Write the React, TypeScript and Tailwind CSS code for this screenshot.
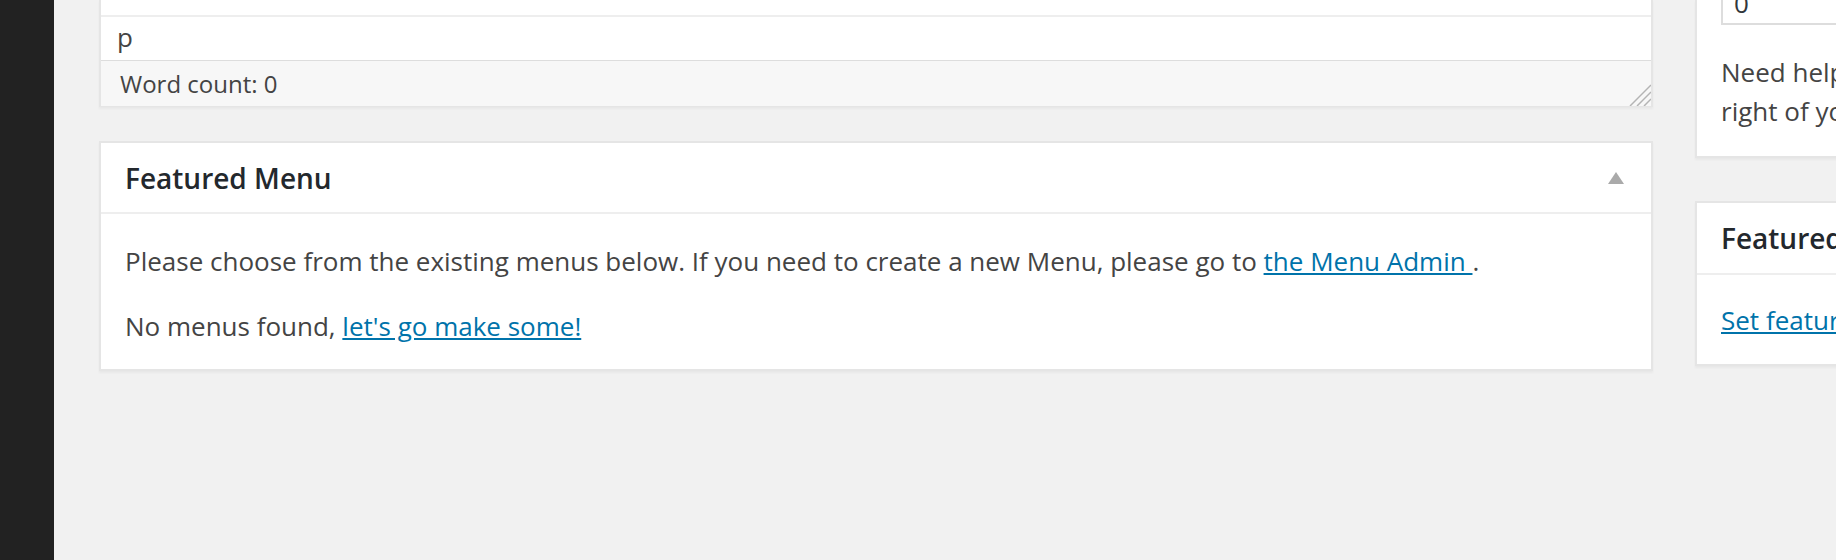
export default function App() {
  return (
    <div className="flex h-[560px] w-[1836px] overflow-hidden bg-[#f1f1f1] font-['Open_Sans',sans-serif] text-[#444]">
      <div className="w-[54px] shrink-0 bg-[#222]" />

      <div className="flex shrink-0 gap-[42px] pl-[45px]">
        {/* main column */}
        <div className="w-[1554px] shrink-0">
          <div className="border-x-2 border-b border-[#e5e5e5] bg-white shadow-[0_2px_2px_rgba(0,0,0,0.04)]">
            <div className="h-[15px]" />
            <div className="h-[2px] bg-[#eee]" />
            <div className="flex h-[43px] items-center pb-[4px] pl-[16px] text-[26px] leading-none">p</div>
            <div className="flex h-[46px] items-center justify-between border-t border-[#ddd] bg-[#f7f7f7] pl-[19px]">
              <span className="text-[24px] leading-none">Word count: 0</span>
              <svg width="22" height="22" viewBox="0 0 22 22" className="self-end">
                <line x1="1" y1="22" x2="22" y2="1" stroke="#b4b4b4" strokeWidth="1.5" />
                <line x1="8" y1="22" x2="22" y2="8" stroke="#b4b4b4" strokeWidth="1.5" />
                <line x1="15" y1="22" x2="22" y2="15" stroke="#b4b4b4" strokeWidth="1.5" />
              </svg>
            </div>
          </div>

          <div className="mt-[34px] border-2 border-[#e5e5e5] bg-white shadow-[0_2px_2px_rgba(0,0,0,0.04)]">
            <div className="flex h-[71px] items-center justify-between border-b-2 border-[#eee] pl-[24px] pr-[27px]">
              <h2 className="text-[28px] font-semibold text-[#23282d]">Featured Menu</h2>
              <svg width="16" height="12" viewBox="0 0 16 12">
                <polygon points="8,0 16,12 0,12" fill="#aaaaaa" />
              </svg>
            </div>
            <div className="flex flex-col gap-[26px] px-[24px] pb-[23px] pt-[28px] text-[26px] leading-[39px]">
              <p>
                Please choose from the existing menus below. If you need to create a new Menu, please go to{' '}
                <a href="#" className="text-[#0073aa] underline">
                  {'the Menu Admin '}
                </a>
                .
              </p>
              <p>
                No menus found,{' '}
                <a href="#" className="text-[#0073aa] underline">
                  let's go make some!
                </a>
              </p>
            </div>
          </div>
        </div>

        {/* sidebar column */}
        <div className="w-[560px] shrink-0">
          <div className="border-x-2 border-b-2 border-[#e5e5e5] bg-white px-[24px] pb-[25px] shadow-[0_2px_2px_rgba(0,0,0,0.04)]">
            <div className="h-[25px] overflow-hidden border-x-2 border-b-2 border-[#ddd] pl-[11px]">
              <div className="-mt-[16px] text-[26px] leading-[39px] text-[#32373c]">0</div>
            </div>
            <p className="mt-[28px] whitespace-nowrap text-[26px] leading-[39px]">
              Need help? Use the Help tab in the upper
              <br />
              right of your screen.
            </p>
          </div>

          <div className="mt-[43px] border-2 border-[#e5e5e5] bg-white shadow-[0_2px_2px_rgba(0,0,0,0.04)]">
            <div className="flex h-[72px] items-center border-b-2 border-[#eee] pl-[24px]">
              <h2 className="whitespace-nowrap text-[28px] font-semibold text-[#23282d]">Featured Image</h2>
            </div>
            <div className="px-[24px] pb-[24px] pt-[26px] text-[26px] leading-[39px]">
              <a href="#" className="whitespace-nowrap text-[#0073aa] underline">
                Set featured image
              </a>
            </div>
          </div>
        </div>
      </div>
    </div>
  )
}
